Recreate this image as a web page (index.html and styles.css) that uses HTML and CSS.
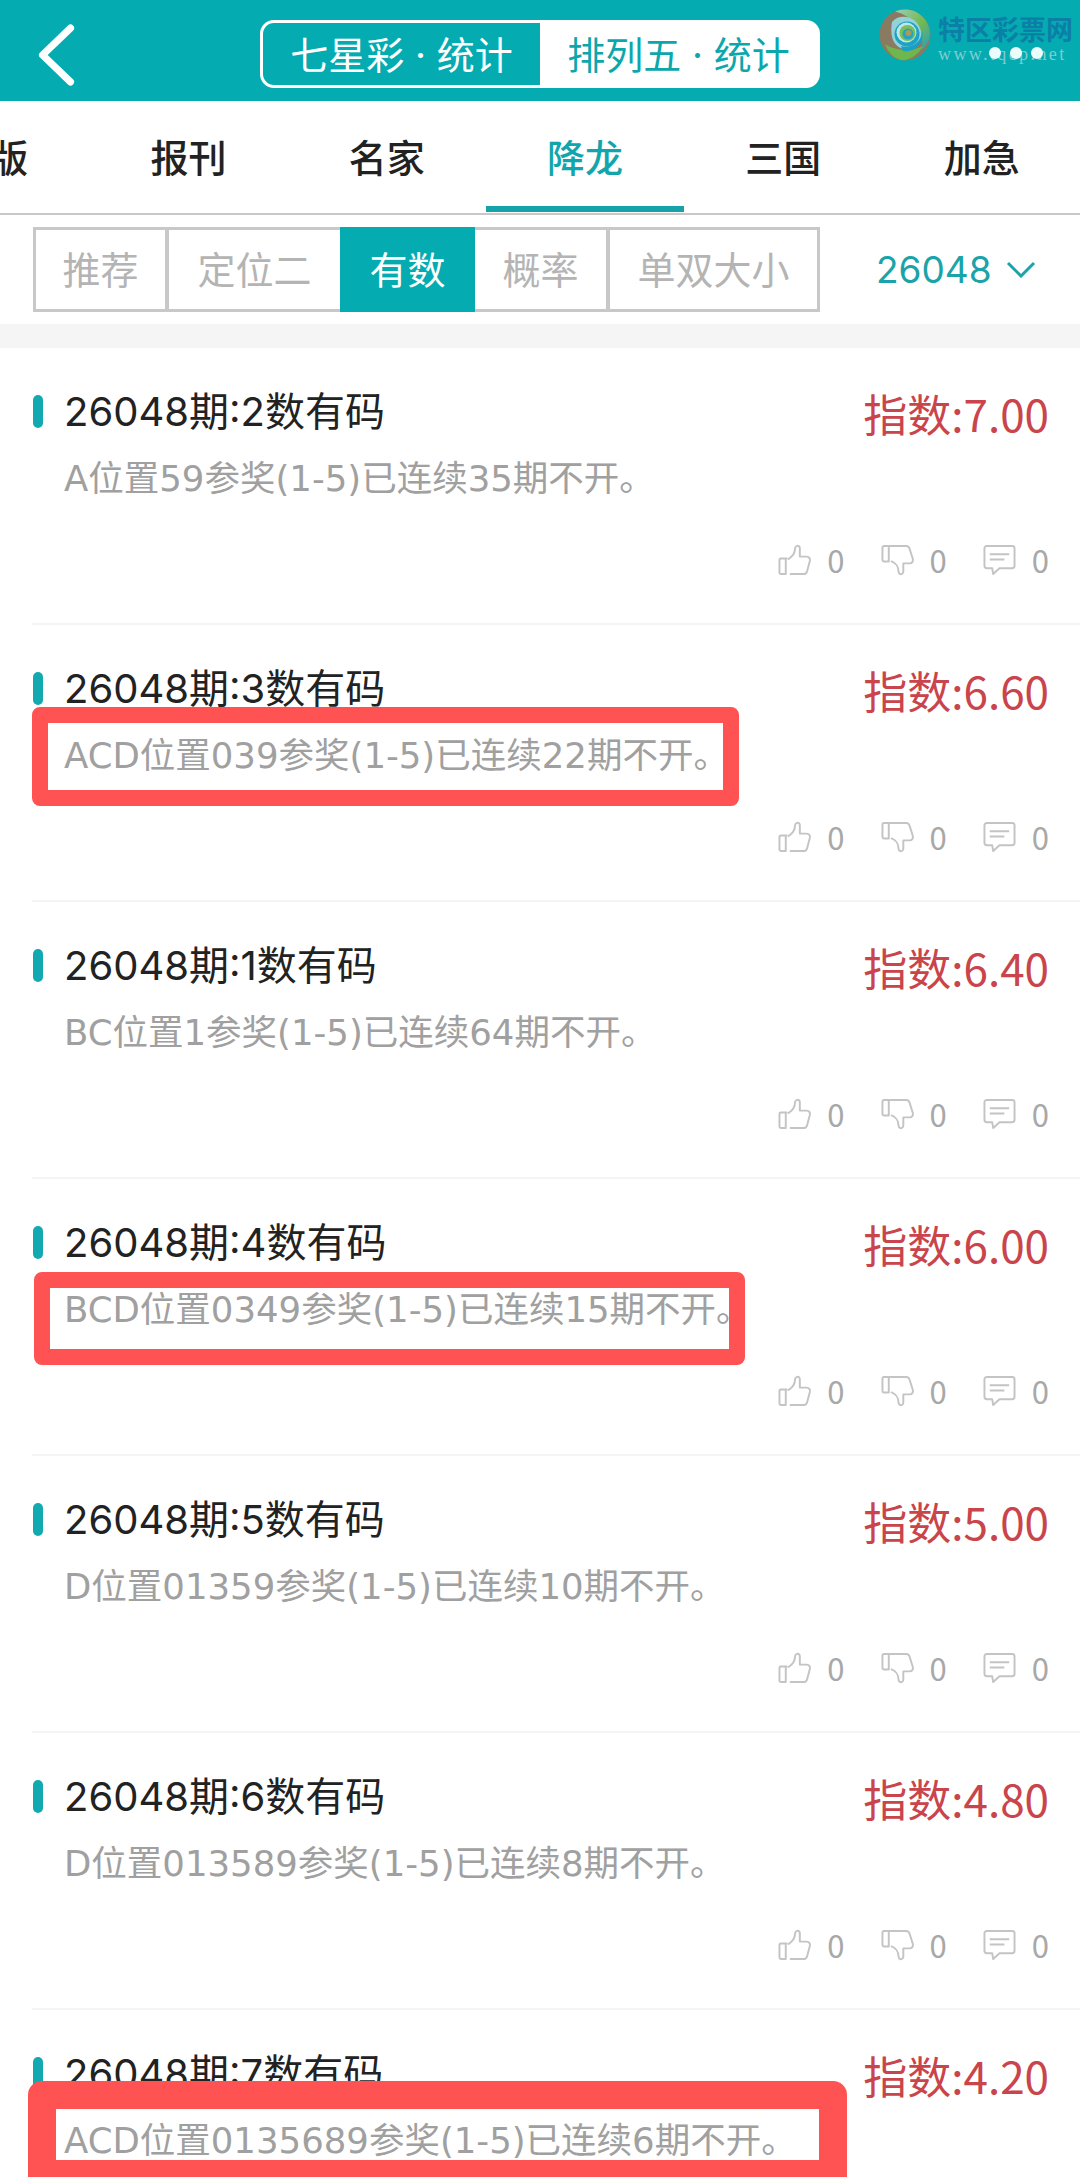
FILE: index.html
```html
<!DOCTYPE html>
<html lang="zh-CN">
<head>
<meta charset="utf-8">
<title>降龙</title>
<link rel="stylesheet" href="styles.css">
</head>
<body>
<svg class="defs" width="0" height="0" aria-hidden="true">
  <defs>
    <symbol id="i-up" viewBox="0 0 34 32">
      <path d="M9 14.5 H3 A1.5 1.5 0 0 0 1.5 16 V29 A1.5 1.5 0 0 0 3 30.5 H8" fill="none" stroke="currentColor" stroke-width="2" stroke-linecap="round" stroke-linejoin="round"/>
      <path d="M8 15v15" fill="none" stroke="currentColor" stroke-width="2"/>
      <path d="M13 30.500H26C28 30.500 29.500 29.500 30 27.500L32.800 17C33.300 14.500 32 12.500 29.500 12.500H22.500V4C22.500 1.800 20.800 1 19.500 1.500C18 2 17.500 3 17.500 4.500C17.500 9 14 13 11 15" fill="none" stroke="currentColor" stroke-width="2" stroke-linecap="round" stroke-linejoin="round"/>
    </symbol>
    <symbol id="i-down" viewBox="0 0 34 32">
      <path d="M9 1.500H3A1.500 1.500 0 0 0 1.500 3V16A1.500 1.500 0 0 0 3 17.500H8V1.500" fill="none" stroke="currentColor" stroke-width="2" stroke-linecap="round" stroke-linejoin="round"/>
      <path d="M10 1.500H26C28 1.500 29 2.500 29.500 4.500L32.800 15C33.300 17.500 32 19.500 29.500 19.500H23V27.500C23 29.800 21.500 31 20 30.500C18.500 30 18 29 18 27.500C18 23 15 19 11 17.500" fill="none" stroke="currentColor" stroke-width="2" stroke-linecap="round" stroke-linejoin="round"/>
    </symbol>
    <symbol id="i-msg" viewBox="0 0 34 32">
      <path d="M4 1.500H30A2.500 2.500 0 0 1 32.500 4V22A2.500 2.500 0 0 1 30 24.500H17L10.500 30.500L9.500 24.500H4A2.500 2.500 0 0 1 1.500 22V4A2.500 2.500 0 0 1 4 1.500Z" fill="none" stroke="currentColor" stroke-width="2" stroke-linejoin="round"/>
      <path d="M7 10H27M7 15.500H22" fill="none" stroke="currentColor" stroke-width="2"/>
    </symbol>
  </defs>
</svg>

<div class="page">
  <header class="topbar">
    <svg class="back" viewBox="0 0 38 60" aria-hidden="true">
      <path d="M33 4 L6 30 L33 56" fill="none" stroke="#fff" stroke-width="7" stroke-linecap="round" stroke-linejoin="round"/>
    </svg>
    <div class="segment">
      <div class="seg seg-on">七星彩 · 统计</div>
      <div class="seg">排列五 · 统计</div>
    </div>
    <div class="logo">
      <svg class="logo-mark" viewBox="0 0 52 52" aria-hidden="true">
        <defs>
          <linearGradient id="lg" x1="0" y1="0" x2="1" y2="1">
            <stop offset="0" stop-color="#9ccdb8"/>
            <stop offset="0.55" stop-color="#74b84e"/>
            <stop offset="1" stop-color="#1f9fc9"/>
          </linearGradient>
        </defs>
        <circle cx="26" cy="26" r="25.500" fill="#8a7a62"/>
        <path d="M16 2.500A25 25 0 0 1 51 26C50 33 46 38 42 41C47 28 38 8 16 2.500Z" fill="url(#lg)"/>
        <path d="M6 35C14 41 32 44 44 37C38 48 28 52 22 51C14 49 9 43 6 35Z" fill="#6fb64d"/>
        <path d="M13 13C20 4 38 6 42 22C44 33 36 40 26 40C17 39 10 31 13 13Z" fill="#93d2da"/>
        <path d="M22 37C32 40 43 33 43 22C46 34 36 44 24 42Z" fill="#18a0c6"/>
        <circle cx="28" cy="25" r="12.500" fill="#1ba2c6"/>
        <circle cx="27.500" cy="23.500" r="10" fill="#bfe6e4"/>
        <circle cx="28.500" cy="24" r="8" fill="#7bbf5b"/>
        <circle cx="29" cy="25" r="5.500" fill="#25a3c4"/>
        <circle cx="29.500" cy="24" r="3" fill="#a89b55"/>
      </svg>
      <div class="logo-text">
        <div class="logo-name">特区彩票网</div>
        <div class="logo-url">www.tqcp.net</div>
        <div class="logo-dots"><i></i><i></i><i></i></div>
      </div>
    </div>
  </header>

  <nav class="tabs">
    <div class="tabs-track">
      <div class="tab">图版</div>
      <div class="tab">报刊</div>
      <div class="tab">名家</div>
      <div class="tab tab-on">降龙</div>
      <div class="tab">三国</div>
      <div class="tab">加急</div>
    </div>
  </nav>

  <section class="filter">
    <div class="chips">
      <div class="chip chip-a">推荐</div>
      <div class="chip chip-b">定位二</div>
      <div class="chip chip-c chip-on">有数</div>
      <div class="chip chip-d">概率</div>
      <div class="chip chip-e">单双大小</div>
    </div>
    <div class="period">
      <span>26048</span>
      <svg class="caret" viewBox="0 0 30 17" aria-hidden="true"><path d="M2 2 L15 15 L28 2" fill="none" stroke="currentColor" stroke-width="3"/></svg>
    </div>
  </section>

  <div class="band"></div>

  <main class="list">
    <article class="item">
      <div class="row"><h3 class="title">26048期:2数有码</h3><div class="score">指数:7.00</div></div>
      <p class="desc">A位置59参奖(1-5)已连续35期不开。</p>
      <div class="actions">
        <span class="act"><svg class="ico"><use href="#i-up"/></svg>0</span>
        <span class="act"><svg class="ico"><use href="#i-down"/></svg>0</span>
        <span class="act"><svg class="ico"><use href="#i-msg"/></svg>0</span>
      </div>
    </article>
    <article class="item">
      <div class="row"><h3 class="title">26048期:3数有码</h3><div class="score">指数:6.60</div></div>
      <p class="desc">ACD位置039参奖(1-5)已连续22期不开。</p>
      <div class="actions">
        <span class="act"><svg class="ico"><use href="#i-up"/></svg>0</span>
        <span class="act"><svg class="ico"><use href="#i-down"/></svg>0</span>
        <span class="act"><svg class="ico"><use href="#i-msg"/></svg>0</span>
      </div>
      <div class="mark mark-1"></div>
    </article>
    <article class="item">
      <div class="row"><h3 class="title">26048期:1数有码</h3><div class="score">指数:6.40</div></div>
      <p class="desc">BC位置1参奖(1-5)已连续64期不开。</p>
      <div class="actions">
        <span class="act"><svg class="ico"><use href="#i-up"/></svg>0</span>
        <span class="act"><svg class="ico"><use href="#i-down"/></svg>0</span>
        <span class="act"><svg class="ico"><use href="#i-msg"/></svg>0</span>
      </div>
    </article>
    <article class="item">
      <div class="row"><h3 class="title">26048期:4数有码</h3><div class="score">指数:6.00</div></div>
      <p class="desc">BCD位置0349参奖(1-5)已连续15期不开。</p>
      <div class="actions">
        <span class="act"><svg class="ico"><use href="#i-up"/></svg>0</span>
        <span class="act"><svg class="ico"><use href="#i-down"/></svg>0</span>
        <span class="act"><svg class="ico"><use href="#i-msg"/></svg>0</span>
      </div>
      <div class="mark mark-2"></div>
    </article>
    <article class="item">
      <div class="row"><h3 class="title">26048期:5数有码</h3><div class="score">指数:5.00</div></div>
      <p class="desc">D位置01359参奖(1-5)已连续10期不开。</p>
      <div class="actions">
        <span class="act"><svg class="ico"><use href="#i-up"/></svg>0</span>
        <span class="act"><svg class="ico"><use href="#i-down"/></svg>0</span>
        <span class="act"><svg class="ico"><use href="#i-msg"/></svg>0</span>
      </div>
    </article>
    <article class="item">
      <div class="row"><h3 class="title">26048期:6数有码</h3><div class="score">指数:4.80</div></div>
      <p class="desc">D位置013589参奖(1-5)已连续8期不开。</p>
      <div class="actions">
        <span class="act"><svg class="ico"><use href="#i-up"/></svg>0</span>
        <span class="act"><svg class="ico"><use href="#i-down"/></svg>0</span>
        <span class="act"><svg class="ico"><use href="#i-msg"/></svg>0</span>
      </div>
    </article>
    <article class="item">
      <div class="row"><h3 class="title">26048期:7数有码</h3><div class="score">指数:4.20</div></div>
      <p class="desc">ACD位置0135689参奖(1-5)已连续6期不开。</p>
      <div class="mark mark-3"></div>
    </article>
  </main>
</div>
</body>
</html>
```

FILE: styles.css
```css
* { box-sizing: border-box; }
html, body { margin: 0; padding: 0; background: #fff; }
body { font-family: Inter, "Noto Sans CJK SC", sans-serif; }
.defs { position: absolute; }
.page { width: 1080px; height: 2177px; overflow: hidden; position: relative; }

/* top bar */
.topbar { height: 101px; padding-top: 20px; background: #04acb2; display: flex; align-items: flex-start; justify-content: center; position: relative; }
.back { position: absolute; left: 36px; top: 24px; width: 40px; height: 62px; }
.segment { width: 560px; height: 68px; display: flex; border: 3px solid #fff; border-radius: 14px; background: #fff; overflow: hidden; }
.seg { flex: 1; display: flex; align-items: center; justify-content: center; padding-top: 2px; font-size: 38px; line-height: 1; color: #0ba7ad; white-space: nowrap; }
.seg-on { background: #04acb2; color: #fff; }

.logo { position: absolute; left: 879px; top: 9px; display: flex; gap: 7px; }
.logo-mark { width: 52px; height: 52px; display: block; }
.logo-text { position: relative; padding-top: 4px; }
.logo-name { font-family: "Noto Sans CJK SC", sans-serif; font-size: 27px; line-height: 32px; font-weight: 700; color: #0b7fa6; white-space: nowrap; }
.logo-url { font-family: "Liberation Serif", serif; font-size: 18px; line-height: 18px; letter-spacing: 2.400px; color: #7fcdcf; white-space: nowrap; }
.logo-dots { position: absolute; left: 51px; top: 38px; display: flex; gap: 9px; }
.logo-dots i { width: 12px; height: 12px; border-radius: 50%; background: #eafcfc; display: block; }

/* channel tabs */
.tabs { height: 114px; border-bottom: 2px solid #c8c8c8; overflow: hidden; }
.tabs-track { display: flex; margin-left: -109px; width: 1190px; height: 112px; }
.tab { width: 198.300px; flex: none; height: 111px; padding-top: 30px; text-align: center; font-size: 38px; line-height: 50px; font-weight: 500; color: #222; font-family: "Noto Sans CJK SC", sans-serif; }
.tab-on { color: #12a5ab; position: relative; }
.tab-on::after { content: ""; position: absolute; left: 0; right: 0; bottom: 0; height: 6px; background: #15a2a8; }

/* filter row */
.filter { height: 109px; padding: 12px 0 0 33px; display: flex; align-items: flex-start; }
.chips { width: 787px; height: 85px; display: flex; border: 3px solid #c8c8c8; }
.chip { display: flex; align-items: center; justify-content: center; font-size: 38px; line-height: 1; color: #b4b4b4; border-left: 4px solid #c8c8c8; white-space: nowrap; margin: 0; }
.chip-a { width: 129px; border-left: 0; }
.chip-b { width: 175px; }
.chip-c { width: 135px; }
.chip-d { width: 131px; }
.chip-e { flex: 1; }
.chip-on { background: #04acb2; color: #fff; border-left: 0; margin: -3px 0; }
.chip-on + .chip { border-left: 0; }
.period { flex: 1; display: flex; align-items: center; height: 85px; padding-left: 56px; gap: 14px; font-size: 37px; line-height: 1; color: #1aa3a9; }
.caret { width: 30px; height: 17px; display: block; }

.band { height: 24px; background: #f5f5f5; }

/* list */
.item { height: 277px; margin-left: 32px; padding-top: 40px; padding-right: 31px; border-bottom: 2px solid #f4f4f4; position: relative; }
.item:last-child { border-bottom: 0; }
.row { display: flex; justify-content: space-between; align-items: flex-start; }
.title { margin: 0; padding-left: 32px; font-size: 40px; line-height: 48px; font-weight: 400; color: #222; position: relative; white-space: nowrap; }
.title::before { content: ""; position: absolute; left: 1px; top: 7px; width: 10px; height: 33px; border-radius: 5px; background: #12aab0; }
.score { font-family: "Noto Sans CJK SC", sans-serif; font-size: 44px; line-height: 50px; color: #c9444b; white-space: nowrap; }
.desc { margin: 0; padding-left: 32px; font-family: "DejaVu Sans", "Noto Sans CJK SC", sans-serif; font-size: 35.500px; line-height: 44px; color: #a0a0a0; white-space: nowrap; margin-top: 19px; }
.actions { display: flex; justify-content: flex-end; gap: 36px; margin-top: 41px; }
.act { display: flex; align-items: center; gap: 16px; font-family: "Noto Sans CJK SC", sans-serif; font-size: 31px; line-height: 36px; color: #a8a8a8; }
.ico { width: 33px; height: 32px; color: #c4c4c4; display: block; }

/* hand-drawn annotation frames over the screenshot */
.mark { position: absolute; border-style: solid; border-color: #ff5252; background: transparent; }
.mark-1 { left: 0; top: 82px; width: 707px; height: 99px; border-width: 16px; border-radius: 8px; }
.mark-2 { left: 2px; top: 93px; width: 711px; height: 93px; border-width: 16px; border-radius: 8px; }
.mark-3 { left: -4px; top: 71px; width: 819px; height: 96px; border-width: 28px 28px 17px; border-radius: 14px 14px 0 0; }
```
